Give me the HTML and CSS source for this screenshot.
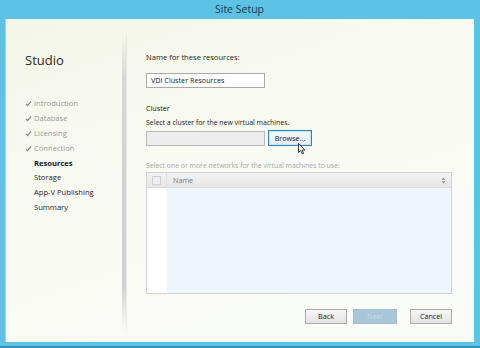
FILE: index.html
```html
<!DOCTYPE html>
<html lang="en">
<head>
    <meta charset="UTF-8">
    <meta name="viewport" content="width=device-width, initial-scale=1.0">
    <title>Site Setup</title>
    <link rel="stylesheet" href="styles.css">
</head>
<body>

<div class="window">
    <div class="title-bar">Site Setup</div>

    <div class="client">
        <!-- Left: wizard steps -->
        <div class="sidebar">
            <div class="brand">Studio</div>
            <ul class="steps">
                <li class="done"><svg class="check" viewBox="0 0 8 8"><path d="M1 4.4 L3 6.3 L7 1.6" /></svg>Introduction</li>
                <li class="done"><svg class="check" viewBox="0 0 8 8"><path d="M1 4.4 L3 6.3 L7 1.6" /></svg>Database</li>
                <li class="done"><svg class="check" viewBox="0 0 8 8"><path d="M1 4.4 L3 6.3 L7 1.6" /></svg>Licensing</li>
                <li class="done"><svg class="check" viewBox="0 0 8 8"><path d="M1 4.4 L3 6.3 L7 1.6" /></svg>Connection</li>
                <li class="current">Resources</li>
                <li>Storage</li>
                <li>App-V Publishing</li>
                <li>Summary</li>
            </ul>
        </div>
        <div class="divider"></div>

        <!-- Right: page content -->
        <div class="main">
            <div class="field-label">Name for these resources:</div>
            <div class="textbox">VDI Cluster Resources</div>

            <div class="section-label">Cluster</div>
            <div class="hint">Select a cluster for the new virtual machines.</div>
            <div class="browse-row">
                <div class="textbox readonly"></div>
                <div class="btn focused">Browse...
                    <svg class="cursor" viewBox="0 0 8 12"><path d="M0.5 0.5 L0.5 9.5 L2.7 7.5 L4.3 11 L5.6 10.4 L4.1 7 L7 7 Z" /></svg>
                </div>
            </div>

            <div class="hint muted">Select one or more networks for the virtual machines to use:</div>
            <div class="grid">
                <div class="grid-head">
                    <div class="head-check"><span class="box"></span></div>
                    <div class="head-name">Name</div>
                    <svg class="sort" viewBox="0 0 6 8"><path d="M3 0.5 L5.2 3 L0.8 3 Z M3 7.5 L5.2 5 L0.8 5 Z" /></svg>
                </div>
                <div class="grid-body">
                    <div class="body-check"></div>
                    <div class="body-rows"></div>
                </div>
            </div>

            <div class="actions">
                <div class="btn">Back</div>
                <div class="btn disabled">Next</div>
                <div class="btn cancel">Cancel</div>
            </div>
        </div>
    </div>
</div>

</body>
</html>
```

FILE: styles.css
```css
html, body {
    margin: 0;
    padding: 0;
}
body {
    width: 480px;
    height: 348px;
    font-family: "Open Sans", "Noto Sans", sans-serif;
    overflow: hidden;
}
.window {
    height: 348px;
    box-sizing: border-box;
    background-color: #5cc3e7;
    border-bottom: 2px solid #3a8fb5;
    display: flex;
    flex-direction: column;
    padding: 0 6px 4px 5px;
}
.title-bar {
    height: 19px;
    line-height: 18px;
    text-align: center;
    font-size: 10.5px;
    color: #1b3646;
}
.client {
    flex: 1;
    display: flex;
    background: linear-gradient(160deg, #f5f6e9 0%, #f9faf3 45%, #fafcf8 100%);
    box-shadow: inset 1px 0 0 #9fd8ee;
}
.sidebar {
    width: 117px;
    padding-left: 20px;
    box-sizing: border-box;
}
.brand {
    margin-top: 32px;
    font-size: 13px;
    line-height: 18px;
    color: #2a2a2a;
}
.steps {
    list-style: none;
    margin: 27px 0 0 0;
    padding: 0;
}
.steps li {
    height: 14.9px;
    line-height: 14.9px;
    font-size: 7.6px;
    color: #1e1e1e;
    padding-left: 9px;
    position: relative;
}
.steps li.done {
    color: #9a9a9a;
}
.steps li.current {
    font-weight: bold;
    color: #111;
}
.check {
    position: absolute;
    left: 0;
    top: 4px;
    width: 7px;
    height: 7px;
    fill: none;
    stroke: #8c8c8c;
    stroke-width: 1.4;
}
.divider {
    width: 4px;
    margin: 14px 0 12px 0;
    background: linear-gradient(to bottom, rgba(210,210,210,0), #d6d6d6 15%, #d0d0d0 85%, rgba(210,210,210,0));
    box-shadow: 1px 0 2px rgba(0,0,0,0.06);
}
.main {
    flex: 1;
    padding: 33px 0 0 20px;
    font-size: 7.6px;
    color: #222;
}
.field-label {
    line-height: 11px;
}
.textbox {
    width: 119px;
    height: 15px;
    box-sizing: border-box;
    margin-top: 10px;
    border: 1px solid #a9a9a9;
    background-color: #fff;
    padding-left: 4px;
    line-height: 13px;
    font-size: 7.2px;
}
.section-label {
    margin-top: 15px;
    line-height: 11px;
    font-size: 7.2px;
}
.hint {
    margin-top: 3px;
    line-height: 11px;
    font-size: 6.9px;
}
.browse-row {
    display: flex;
    gap: 3px;
    margin-top: 2px;
    height: 16px;
}
.browse-row .textbox {
    margin-top: 1px;
}
.textbox.readonly {
    background-color: #ececec;
    border-color: #b8b8b8;
}
.btn {
    position: relative;
    height: 15px;
    line-height: 13px;
    box-sizing: border-box;
    border: 1px solid #ababab;
    background: linear-gradient(to bottom, #f6f6f6, #e4e4e4);
    text-align: center;
    font-size: 7.2px;
    color: #222;
}
.btn.focused {
    width: 44px;
    height: 16px;
    line-height: 14px;
    border: 1px solid #3c7fb1;
    box-shadow: inset 0 0 0 1px #c8e3f6;
    background: linear-gradient(to bottom, #f2f8fd, #e3eef8);
}
.cursor {
    position: absolute;
    left: 29px;
    top: 12px;
    width: 8px;
    height: 12px;
    fill: #fff;
    stroke: #222;
    stroke-width: 0.9;
}
.hint.muted {
    margin-top: 14px;
    color: #a8a8a8;
}
.grid {
    width: 306px;
    height: 122px;
    margin-top: 1px;
    box-sizing: border-box;
    border: 1px solid #d2d2d2;
    background-color: #fff;
    display: flex;
    flex-direction: column;
}
.grid-head {
    height: 14px;
    display: flex;
    align-items: center;
    background: linear-gradient(to bottom, #f3f3f3, #e6e6e6);
    border-bottom: 1px solid #dcdcdc;
}
.head-check {
    width: 19px;
    height: 14px;
    display: flex;
    align-items: center;
    justify-content: center;
    border-right: 1px solid #dcdcdc;
}
.box {
    width: 7px;
    height: 7px;
    border: 1px solid #cfcfcf;
    background-color: #eeeeee;
}
.head-name {
    flex: 1;
    padding-left: 6px;
    color: #777;
    font-size: 7.2px;
}
.sort {
    width: 5px;
    height: 7px;
    margin-right: 5px;
    fill: #8a8a8a;
}
.grid-body {
    flex: 1;
    display: flex;
}
.body-check {
    width: 20px;
    background-color: #fff;
}
.body-rows {
    flex: 1;
    background-color: #eef6fd;
}
.actions {
    display: flex;
    margin-top: 15px;
    width: 306px;
    justify-content: flex-end;
    gap: 6px;
}
.actions .btn {
    width: 42px;
}
.actions .btn.disabled {
    width: 44px;
    border-color: #a2bfd2;
    background: #a9c5d8;
    color: #c9dbe7;
}
.actions .btn.cancel {
    margin-left: 7px;
}
```
